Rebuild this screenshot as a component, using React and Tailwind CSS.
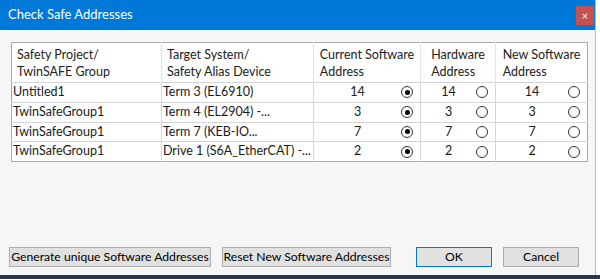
import React from 'react';

const rows = [
  { group: 'Untitled1', target: 'Term 3 (EL6910)', cur: 14, hw: 14, nw: 14 },
  { group: 'TwinSafeGroup1', target: 'Term 4 (EL2904) -...', cur: 3, hw: 3, nw: 3 },
  { group: 'TwinSafeGroup1', target: 'Term 7 (KEB-IO...', cur: 7, hw: 7, nw: 7 },
  { group: 'TwinSafeGroup1', target: 'Drive 1 (S6A_EtherCAT) -...', cur: 2, hw: 2, nw: 2 },
];

function Radio({ checked }) {
  return (
    <span className="w-[12px] h-[12px] rounded-full border border-[#333] bg-white flex items-center justify-center shrink-0">
      {checked && <span className="w-[5px] h-[5px] rounded-full bg-black" />}
    </span>
  );
}

function AddrCell({ value, checked, last }) {
  return (
    <td className={`h-[19px] p-0 ${last ? '' : 'border-r'} border-[#d5d5d5]`}>
      <div className="flex items-center h-[18px] pr-[7px]">
        <span className="flex-1 text-center">{value}</span>
        <Radio checked={checked} />
      </div>
    </td>
  );
}

function Btn({ children, w, primary }) {
  return (
    <button
      className={`${w} h-[20px] bg-[#e1e1e1] border ${primary ? 'border-[#0078d7]' : 'border-[#adadad]'} text-[12.2px] text-black leading-none whitespace-nowrap flex items-center justify-center`}
    >
      {children}
    </button>
  );
}

export default function App() {
  return (
    <div className="w-[600px] h-[279px] bg-white flex flex-col font-['Lato',sans-serif] text-[12.5px] text-[#1a1a1a] overflow-hidden">
      <div className="flex-1 flex">
        <div className="w-[596px] border-r border-[#bdbdbd] flex flex-col">
          {/* title bar */}
          <div className="h-[30px] bg-[#0078d7] flex items-center justify-between pl-[8px] pr-[1px]">
            <span className="text-white text-[13px]">Check Safe Addresses</span>
            <span className="w-[18px] h-[19px] bg-[#c75050] text-white text-[11px] flex items-center justify-center leading-none">×</span>
          </div>

          <div className="flex-1 bg-[#f6f6f6] flex flex-col px-[11px] pt-[12px] pb-[8px]">
            <table className="w-[577px] border border-[#a9a9a9] bg-white border-collapse table-fixed">
              <thead>
                <tr className="h-[40px] border-b border-[#d5d5d5] text-[#222]">
                  <th className="w-[150px] font-normal text-left align-top pl-[5px] pt-[3px] border-r border-[#e3e3e3] leading-[17px]">
                    Safety Project/<br />TwinSAFE Group
                  </th>
                  <th className="w-[152px] font-normal text-left align-top pl-[5px] pt-[3px] border-r border-[#e3e3e3] leading-[17px]">
                    Target System/<br />Safety Alias Device
                  </th>
                  <th className="w-[107px] font-normal text-center align-top pt-[3px] border-r border-[#e3e3e3] leading-[17px]">
                    <span className="inline-block text-left">Current Software<br />Address</span>
                  </th>
                  <th className="w-[75px] font-normal text-center align-top pt-[3px] border-r border-[#e3e3e3] leading-[17px]">
                    <span className="inline-block text-left">Hardware<br />Address</span>
                  </th>
                  <th className="font-normal text-center align-top pt-[3px] leading-[17px]">
                    <span className="inline-block text-left">New Software<br />Address</span>
                  </th>
                </tr>
              </thead>
              <tbody>
                {rows.map((r, i) => (
                  <tr key={i} className="border-b border-[#d5d5d5] last:border-b-0">
                    <td className="h-[19px] p-0 pl-[1px] border-r border-[#d5d5d5] whitespace-nowrap overflow-hidden">{r.group}</td>
                    <td className="h-[19px] p-0 pl-[1px] border-r border-[#d5d5d5] whitespace-nowrap overflow-hidden">{r.target}</td>
                    <AddrCell value={r.cur} checked />
                    <AddrCell value={r.hw} />
                    <AddrCell value={r.nw} last />
                  </tr>
                ))}
              </tbody>
            </table>

            <div className="mt-auto flex items-center -ml-[2px]">
              <Btn w="w-[202px]">Generate unique Software Addresses</Btn>
              <div className="w-[11px]" />
              <Btn w="w-[169px]">Reset New Software Addresses</Btn>
              <div className="flex-1" />
              <Btn w="w-[76px]" primary>OK</Btn>
              <div className="w-[11px]" />
              <Btn w="w-[76px]">Cancel</Btn>
              <div className="w-[5px]" />
            </div>
          </div>
        </div>
      </div>
      <div className="h-[4px] bg-[#27384c]" />
    </div>
  );
}
